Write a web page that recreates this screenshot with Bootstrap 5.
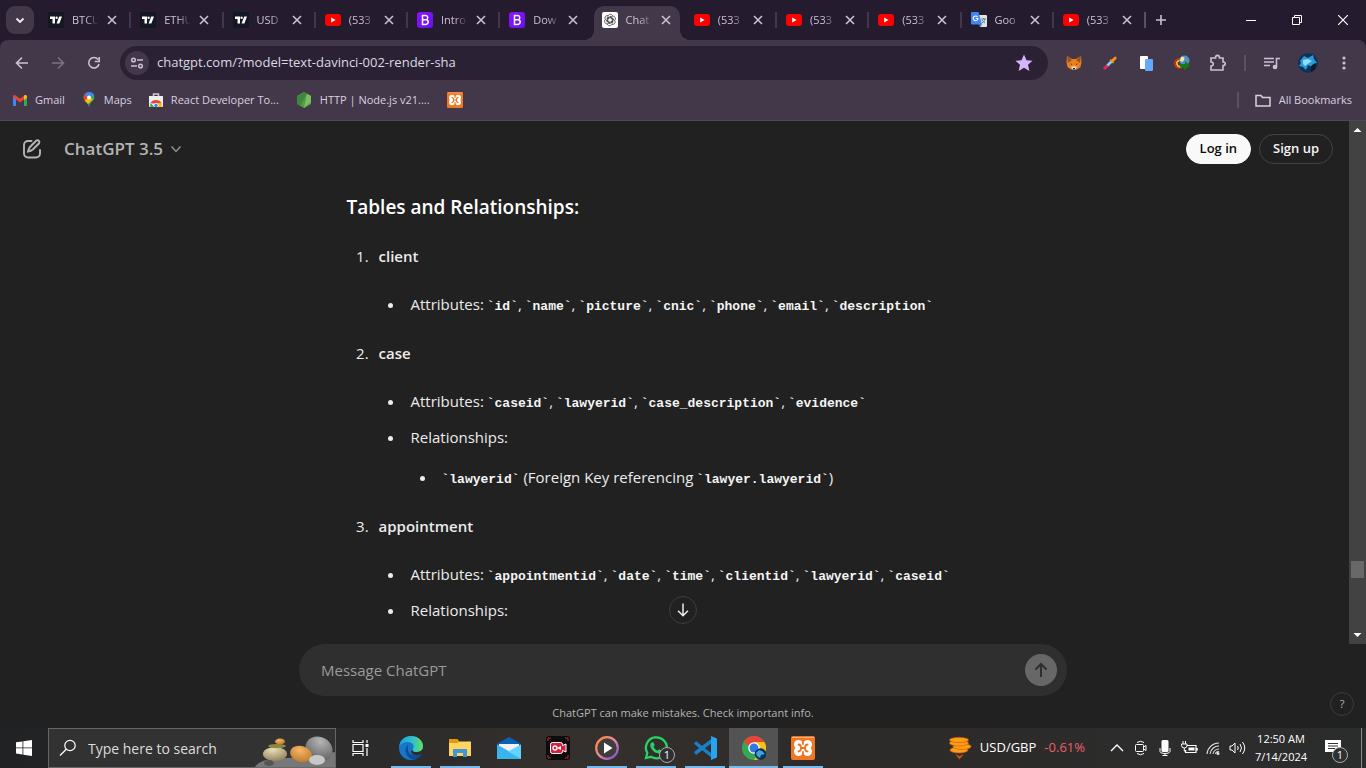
<!DOCTYPE html>
<html lang="en" data-bs-theme="dark">
<head>
<meta charset="utf-8">
<meta name="viewport" content="width=device-width, initial-scale=1">
<title>ChatGPT</title>
<link rel="stylesheet" href="https://cdn.jsdelivr.net/npm/bootstrap@5.3.0/dist/css/bootstrap.min.css">
<style>
:root{--ui:"Open Sans","Noto Sans",sans-serif;--frame:#241b2e;--bar:#433849;--soft:#cdbfd9}
body{font-family:var(--ui);background:#212121;color:#ececec;font-size:15px;overflow:hidden}
svg{display:block;flex:none}
button{font-family:inherit;color:inherit}
.plain{background:none;border:0;padding:0;display:flex;align-items:center;justify-content:center;flex:none}
a{color:inherit;text-decoration:none}
/* browser tabs */
.tabstrip{background:var(--frame);height:40px;color:var(--soft)}
.tabsearch{width:28px;height:28px;border-radius:9px;background:var(--bar);margin:0 3px 0 6px}
.tab{flex:1 1 0;min-width:0;height:40px;padding:0 11px 0 11px;position:relative;font-size:11px}
.tab::before{content:"";position:absolute;left:0;top:12px;width:2px;height:16px;background:#43374b}
.tab:first-child::before,.tab.current::before,.tab.current + .tab::before{display:none}
.tab-label{white-space:nowrap;width:30px;margin:0 4px 0 8px;-webkit-mask-image:linear-gradient(90deg,#000 45%,transparent 90%);mask-image:linear-gradient(90deg,#000 45%,transparent 90%)}
.tab.current{z-index:1}
.tab-shape{position:absolute;z-index:-1;left:3px;right:3px;top:6px;bottom:0;background:var(--bar);border-radius:10px 10px 0 0}
.tab-shape::before,.tab-shape::after{content:"";position:absolute;bottom:0;width:10px;height:10px}
.tab-shape::before{left:-10px;background:radial-gradient(circle at 0 0,transparent 10px,var(--bar) 10px)}
.tab-shape::after{right:-10px;background:radial-gradient(circle at 100% 0,transparent 10px,var(--bar) 10px)}
.tabs-right{width:222px}
.winbtn{width:46px;height:40px;color:#fff}
/* toolbar */
.chromebars{background:var(--frame)}
.chromebars-in{background:var(--bar);border-radius:8px 8px 0 0;border-bottom:1px solid #51465a;height:81px;color:var(--soft)}
.toolbar{height:46px;padding-left:4px;padding-right:4px}
.tool{width:36px;height:36px}
.urlbar{background:#2a2234;height:34px;border-radius:17px;margin:0 8px;padding:0 12px 0 5px}
.site{width:24px;height:24px;border-radius:50%;background:var(--bar)}
.urlbar input,.ask input,.find input{background:none;border:0;outline:0;padding:0;min-width:0;color:inherit}
.urlbar input{font-size:13px;color:#ded8e3;margin-left:8px}
.rule{width:2px;height:16px;background:#5c5066;flex:none}
.marks{height:28px;padding:0 14px 0 13px;font-size:11px;color:#d9cfe1}
.marks a{display:flex;align-items:center;gap:8px;white-space:nowrap}
.marks .mark-item{margin-right:17px}
/* chat */
.chat,.chat-main{min-height:0}
.chat-head{height:56px;padding:0 16px 0 20px}
.model{font-size:17px;font-weight:600;color:#b4b4b4;gap:6px}
.pill{height:30px;border-radius:15px;font-size:13px;font-weight:600;padding:0 13px;border:1px solid #424242;background:#212121;color:#f5f5f5}
.pill.solid{background:#f9f9f9;color:#0d0d0d;border-color:#f9f9f9}
.thread{width:656px;max-width:100%;margin:14px auto 0;line-height:28px}
.thread h3{font-size:19px;font-weight:600;line-height:32px;margin:0 0 19px}
.thread p{margin:0}
.thread ol,.thread ul{padding-left:26px;margin:0}
.thread ul{list-style:disc}
.thread li{padding-left:6px}
.thread ol > li{margin-bottom:21px}
.thread ol > li::marker{content:counter(list-item) ".\00a0"}
.thread ol > li > ul{margin-top:20px}
.thread ul > li + li{margin-top:8px}
.thread ul ul{margin-top:12px}
.thread strong{font-weight:600}
.thread code{font:700 13px/20px "Liberation Mono",monospace;color:#f5f5f5;margin-left:-1px}
.scroller{width:17px;background:#424242;flex:none;padding:4px 0}
.thumb{width:13px;height:17px;background:#686868;margin-top:auto;margin-bottom:52px}
.jump{position:absolute;left:50%;bottom:20px;margin-left:-14px;width:28px;height:28px;border-radius:50%;border:1px solid #3d3d3d;background:#212121}
.foot{height:84px;position:relative}
.ask{width:768px;max-width:100%;height:52px;border-radius:26px;background:#2f2f2f;padding:0 10px 0 22px}
.ask input::placeholder{color:#9b9b9b;opacity:1}
.send{width:32px;height:32px;border-radius:50%;background:#676767}
.note{font-size:11px;line-height:16px;color:#b4b4b4;margin-top:9px}
.help{position:absolute;right:12px;bottom:12px;width:24px;height:24px;border-radius:50%;border:1px solid #3d3d3d;background:#212121;font-size:11px;color:#b4b4b4}
/* taskbar */
.taskbar{height:40px;background:linear-gradient(90deg,#202224,#2a2a2a 25%,#34302d 42%,#2d2b2a 60%,#2b2c2c);color:#fff;font-size:14px;flex:none}
.start{width:48px;height:40px}
.find{width:288px;height:40px;background:#323232;border:1px solid #666;padding-left:10px;position:relative}
.find input{width:150px;font-size:14px;margin-left:11px}
.find input::placeholder{color:#dcdcdc;opacity:1}
.find .art{position:absolute;right:0;bottom:0}
.apps{padding-left:2px}
.app{width:49px;height:40px;position:relative}
.app.open::after{content:"";position:absolute;left:5px;right:4px;bottom:0;height:2px;background:#76b9ed}
.app.front{background:#535353}
.app.front::after{left:0;right:0}
.count{position:absolute;left:28px;top:19px;width:16px;height:16px;border:1px solid #aaa;border-radius:50%;background:#303030;font-size:11px;line-height:14px;text-align:center}
.bell .count{left:19px}
.rates{font-size:13px}
.drop{color:#ee6065}
.tray{width:24px;height:40px}
.clock{width:64px;font-size:11px;line-height:18px;text-align:center}
.bell{width:40px;height:40px;position:relative}
.edge{width:1px;background:#888;margin:0 4px 0 8px}
</style>
</head>
<body class="vh-100 d-flex flex-column">
<svg width="0" height="0" class="position-absolute" aria-hidden="true">
<defs>
<linearGradient id="gb" x1="0" y1="0" x2="1" y2="1"><stop stop-color="#9013fb"/><stop offset="1" stop-color="#6610f2"/></linearGradient>
<linearGradient id="ge" x1="0" y1="0" x2="1" y2="0"><stop stop-color="#1b9de2"/><stop offset=".6" stop-color="#35c1c9"/><stop offset="1" stop-color="#62e257"/></linearGradient>
<linearGradient id="gp" x1="0" y1="0" x2="1" y2="1"><stop stop-color="#ff8a33"/><stop offset=".5" stop-color="#e08aa0"/><stop offset="1" stop-color="#6c50d0"/></linearGradient>
<radialGradient id="stone" cx=".4" cy=".2" r=".8"><stop stop-color="#b5b5b5"/><stop offset="1" stop-color="#626262"/></radialGradient>
<radialGradient id="sand" cx=".4" cy=".2" r=".8"><stop stop-color="#eadfb8"/><stop offset="1" stop-color="#94845c"/></radialGradient>
<radialGradient id="amber" cx=".4" cy=".3" r=".8"><stop stop-color="#f3b768"/><stop offset="1" stop-color="#b97525"/></radialGradient>
<radialGradient id="wolf" cx=".5" cy=".45" r=".55"><stop stop-color="#8edcff"/><stop offset=".5" stop-color="#2786bd"/><stop offset="1" stop-color="#0b2748"/></radialGradient>
<symbol id="x" viewBox="0 0 12 12"><path d="M2 2l8 8M10 2l-8 8" stroke="currentColor" stroke-width="1.6" fill="none"/></symbol>
<symbol id="tv" viewBox="0 0 16 16"><rect width="16" height="16" rx="2" fill="#131722"/><path d="M2 4.500h5v7H4.500V7H2z" fill="#fff"/><circle cx="8.600" cy="5.700" r="1.200" fill="#fff"/><path d="M11.200 4.500H14l-2.600 7H8.600z" fill="#fff"/></symbol>
<symbol id="yt" viewBox="0 0 16 16"><rect y="2" width="16" height="12" rx="3" fill="#f00"/><path d="M6.200 5.500v5L10.600 8z" fill="#fff"/></symbol>
<symbol id="bs" viewBox="0 0 16 16"><rect width="16" height="16" rx="3" fill="url(#gb)"/><path d="M5.500 3.600h3.200c2.600 0 2.700 3.500.5 4.100 2.900.5 2.500 4.700-.6 4.700H5.500zM5.500 7.800h3.400" fill="none" stroke="#fff" stroke-width="1.500"/></symbol>
<symbol id="gpt" viewBox="0 0 16 16"><rect width="16" height="16" rx="2" fill="#fff"/><g fill="none" stroke="#222" stroke-width=".65"><g id="petal"><path d="M5.900 9.200V4.800c0-3 4.200-3.400 4.800-.8M8 4.700 11.600 6.800"/></g><use href="#petal" transform="rotate(60 8 8)"/><use href="#petal" transform="rotate(120 8 8)"/><use href="#petal" transform="rotate(180 8 8)"/><use href="#petal" transform="rotate(240 8 8)"/><use href="#petal" transform="rotate(300 8 8)"/></g></symbol>
<symbol id="gt" viewBox="0 0 16 16"><path d="M7 3h8a1 1 0 0 1 1 1v10a1 1 0 0 1-1 1H9z" fill="#dfe5e2"/><path d="M10 7h5M12.500 6v1m1.500 0c-.5 2-1.500 3-3 4m0-3c.8 1.400 1.600 2.200 3 3" stroke="#607d8b" fill="none"/><path d="M1 0h6.500L11 12.500H1a1 1 0 0 1-1-1V1a1 1 0 0 1 1-1z" fill="#4285f4"/><path d="M8 12.500h3L9 15z" fill="#1967d2"/><path d="M6.600 5A2.400 2.400 0 1 0 7 6.500H4.800" fill="none" stroke="#fff" stroke-width="1.100"/></symbol>
<symbol id="xampp" viewBox="0 0 24 24"><rect width="24" height="24" rx="2" fill="#ef7622"/><path d="M1 1.500h22" stroke="#ffb27a"/><g fill="#fff"><circle cx="7.500" cy="8.500" r="4.500"/><circle cx="16.500" cy="8.500" r="4.500"/><circle cx="7.500" cy="15.500" r="4.500"/><circle cx="16.500" cy="15.500" r="4.500"/><path d="M6 8h12v8H6z"/></g><path d="M7.500 8.500q2.500 0 2.500 3.500t-2.500 3.500M16.500 8.500q-2.500 0-2.500 3.500t2.500 3.500M10 12h4M12 3v5M12 16v5" fill="none" stroke="#ef7622" stroke-width="1.800" stroke-linecap="round"/></symbol>
</defs></svg>

<header>
<div class="tabstrip d-flex align-items-center">
  <button class="plain tabsearch" aria-label="Search tabs"><svg width="10" height="10" viewBox="0 0 10 10"><path d="M1.500 3.500 5 7l3.500-3.500" fill="none" stroke="#eee" stroke-width="1.800"/></svg></button>
  <nav class="d-flex flex-grow-1" aria-label="Tabs">
    <div class="tab d-flex align-items-center"><svg width="16" height="16"><use href="#tv"/></svg><span class="tab-label">BTCU</span><button class="plain" aria-label="Close"><svg width="12" height="12"><use href="#x"/></svg></button></div>
    <div class="tab d-flex align-items-center"><svg width="16" height="16"><use href="#tv"/></svg><span class="tab-label">ETHU</span><button class="plain" aria-label="Close"><svg width="12" height="12"><use href="#x"/></svg></button></div>
    <div class="tab d-flex align-items-center"><svg width="16" height="16"><use href="#tv"/></svg><span class="tab-label">USD</span><button class="plain" aria-label="Close"><svg width="12" height="12"><use href="#x"/></svg></button></div>
    <div class="tab d-flex align-items-center"><svg width="16" height="16"><use href="#yt"/></svg><span class="tab-label">(533</span><button class="plain" aria-label="Close"><svg width="12" height="12"><use href="#x"/></svg></button></div>
    <div class="tab d-flex align-items-center"><svg width="16" height="16"><use href="#bs"/></svg><span class="tab-label">Intro</span><button class="plain" aria-label="Close"><svg width="12" height="12"><use href="#x"/></svg></button></div>
    <div class="tab d-flex align-items-center"><svg width="16" height="16"><use href="#bs"/></svg><span class="tab-label">Dow</span><button class="plain" aria-label="Close"><svg width="12" height="12"><use href="#x"/></svg></button></div>
    <div class="tab current d-flex align-items-center"><span class="tab-shape"></span><svg width="16" height="16"><use href="#gpt"/></svg><span class="tab-label">Chat</span><button class="plain" aria-label="Close"><svg width="12" height="12"><use href="#x"/></svg></button></div>
    <div class="tab d-flex align-items-center"><svg width="16" height="16"><use href="#yt"/></svg><span class="tab-label">(533</span><button class="plain" aria-label="Close"><svg width="12" height="12"><use href="#x"/></svg></button></div>
    <div class="tab d-flex align-items-center"><svg width="16" height="16"><use href="#yt"/></svg><span class="tab-label">(533</span><button class="plain" aria-label="Close"><svg width="12" height="12"><use href="#x"/></svg></button></div>
    <div class="tab d-flex align-items-center"><svg width="16" height="16"><use href="#yt"/></svg><span class="tab-label">(533</span><button class="plain" aria-label="Close"><svg width="12" height="12"><use href="#x"/></svg></button></div>
    <div class="tab d-flex align-items-center"><svg width="16" height="16"><use href="#gt"/></svg><span class="tab-label">Goo</span><button class="plain" aria-label="Close"><svg width="12" height="12"><use href="#x"/></svg></button></div>
    <div class="tab d-flex align-items-center"><svg width="16" height="16"><use href="#yt"/></svg><span class="tab-label">(533</span><button class="plain" aria-label="Close"><svg width="12" height="12"><use href="#x"/></svg></button></div>
  </nav>
  <div class="tabs-right d-flex align-items-center">
    <span class="rule"></span>
    <button class="plain ms-2" aria-label="New tab"><svg width="14" height="14" viewBox="0 0 14 14"><path d="M7 2v10M2 7h10" stroke="currentColor" stroke-width="1.600"/></svg></button>
    <button class="plain winbtn ms-auto" aria-label="Minimize"><svg width="10" height="10"><path d="M0 5.500h10" stroke="currentColor"/></svg></button>
    <button class="plain winbtn" aria-label="Restore"><svg width="10" height="10"><path d="M.5 2.500h7v7h-7zM2.500 2.500v-2h7v7h-2" fill="none" stroke="currentColor"/></svg></button>
    <button class="plain winbtn" aria-label="Close window"><svg width="10" height="10"><path d="M0 0l10 10M10 0 0 10" stroke="currentColor" stroke-width="1.200"/></svg></button>
  </div>
</div>
<div class="chromebars"><div class="chromebars-in">
  <div class="toolbar d-flex align-items-center">
    <button class="plain tool" aria-label="Back"><svg width="14" height="14" viewBox="0 0 14 14"><path d="M13 7H2M7 1.500 1.500 7 7 12.500" fill="none" stroke="currentColor" stroke-width="1.600"/></svg></button>
    <button class="plain tool" aria-label="Forward"><svg width="14" height="14" viewBox="0 0 14 14"><path d="M1 7h11M7 1.500 12.500 7 7 12.500" fill="none" stroke="#7d7086" stroke-width="1.600"/></svg></button>
    <button class="plain tool" aria-label="Reload"><svg width="14" height="14" viewBox="0 0 14 14"><path d="M11 3.500A5.200 5.200 0 1 0 12 8M12.200 1v4.500H7.700" fill="none" stroke="currentColor" stroke-width="1.600"/></svg></button>
    <div class="urlbar d-flex align-items-center flex-grow-1">
      <button class="plain site" aria-label="Site information"><svg width="14" height="14" viewBox="0 0 14 14" fill="none" stroke="currentColor" stroke-width="1.500"><circle cx="3.500" cy="4" r="1.800"/><path d="M7 4h6M1 10h6"/><circle cx="10.500" cy="10" r="1.800"/></svg></button>
      <input class="flex-grow-1" type="text" aria-label="Address" value="chatgpt.com/?model=text-davinci-002-render-sha">
      <button class="plain" aria-label="Bookmarked"><svg width="24" height="18" viewBox="0 0 24 18"><path d="M12 .5l2.500 5.700 6 .5L16 10.800l1.400 6.200-5.400-3.200L6.600 17 8 10.800 3.500 6.700l6-.5z" fill="#d4b4ff"/></svg></button>
    </div>
    <button class="plain tool" aria-label="MetaMask"><svg width="16" height="16" viewBox="0 0 16 16"><path d="M1 1l5 3h4l5-3 .5 6-1 5-3.500 2.500H5L1.500 12l-1-5z" fill="#e8821e"/><path d="M1 1l5 4-4 3zM15 1l-5 4 4 3z" fill="#a3501f"/><path d="M5 12l2 3h2l2-3-3-1z" fill="#e5d5c5"/><path d="M4 8.500l2 .5v1zM12 8.500l-2 .5v1zM7 13h2v1.500H7z" fill="#222"/></svg></button>
    <button class="plain tool" aria-label="Color picker"><svg width="14" height="14" viewBox="0 0 14 14"><path d="M8.500 5.500 3.500 10.500" stroke="#7ad2ff" stroke-width="2.600"/><path d="M3.500 8.500 5.500 10.500 2.500 13.500H.5v-2z" fill="#f3225b"/><path d="M8 4l4-3.500q2 0 1.500 2L10 6.500z" fill="#ff9215"/><path d="M7 3.500 10.500 7" stroke="#ff9215" stroke-width="1.500"/></svg></button>
    <button class="plain tool" aria-label="Copy extension"><svg width="14" height="15"><rect x="1" width="8" height="13" rx="1" fill="#fff"/><rect x="6" y="3" width="8" height="12" rx="1" fill="#65a9fb"/></svg></button>
    <button class="plain tool" aria-label="Download manager"><svg width="16" height="16" viewBox="0 0 16 16"><path d="M8 3.500C3 3 0 6 1 9.500 2 13 6 13.500 8 12" fill="none" stroke="#e52b1d" stroke-width="1.600"/><path d="M8 5C4 5 2 7 3 9.500s3 2.500 5 1.500" fill="none" stroke="#f2d11b" stroke-width="1.600"/><circle cx="10.500" cy="5.500" r="5" fill="#5490c8"/><path d="M7 2c3-1 4 1 3 3S8 7 6 6z" fill="#e3efb0"/><path d="M5 9h6V6l5 4.500-6 4.500v-2.500H6.500z" fill="#117d12"/></svg></button>
    <button class="plain tool" aria-label="Extensions"><svg width="18" height="18" viewBox="0 0 18 18"><path d="M2 4h4.500c0-3.500 4-3.500 4 0H14v4c3 0 3 3.500 0 3.500V16H2v-4c3 0 3-4 0-4z" fill="none" stroke="currentColor" stroke-width="1.600"/></svg></button>
    <span class="rule mx-2"></span>
    <button class="plain tool" aria-label="Media controls"><svg width="16" height="14" viewBox="0 0 16 14" fill="none" stroke="currentColor" stroke-width="1.500"><path d="M0 2.500h10M0 6h10M0 9.500h6M12.500 11V2.500H16"/><circle cx="11" cy="11" r="1.600" fill="currentColor"/></svg></button>
    <button class="plain tool" aria-label="Profile"><svg width="20" height="20" viewBox="0 0 20 20"><circle cx="10" cy="10" r="10" fill="#0d3159"/><path d="M2 8 6 3l4 2 5-3 1 4 3 4-4 1-1 3-4-2-2 5-3-3-4-1 2-3z" fill="#2c9bd4"/><path d="M5 7l5-1 4 2-3 2-4 3-2-2z" fill="#8fdcff"/><path d="M13 13l5-3-1 6-4 3z" fill="#101828"/></svg></button>
    <button class="plain tool" aria-label="Menu"><svg width="4" height="14" fill="currentColor"><circle cx="2" cy="2" r="1.600"/><circle cx="2" cy="7" r="1.600"/><circle cx="2" cy="12" r="1.600"/></svg></button>
  </div>
  <nav class="marks d-flex align-items-center" aria-label="Bookmarks">
    <a href="#" class="mark-item"><svg width="14" height="11" viewBox="0 0 14 11"><path d="M0 2h3v9H1a1 1 0 0 1-1-1z" fill="#4285f4"/><path d="M11 2h3v8a1 1 0 0 1-1 1h-2z" fill="#34a853"/><path d="M0 2C0 0 2-.5 3 .7l4 3 4-3c1-1.200 3-.7 3 1.300L7 7.500z" fill="#ea4335"/><path d="M11 .7c1-1.200 3-.7 3 1.300v1l-3 2z" fill="#fbbc04"/></svg>Gmail</a>
    <a href="#" class="mark-item"><svg width="14" height="16" viewBox="1 0 14 16"><path d="M8 0a5.500 5.500 0 0 0-5.500 5.500C2.500 9 8 10 8 16c0-6 5.500-7 5.500-10.500A5.500 5.500 0 0 0 8 0z" fill="#34a853"/><path d="M3.800 2.200A5.500 5.500 0 0 1 13 3L8 8 3 7.500z" fill="#4285f4"/><path d="M3.800 2.200 8 5.500 4.500 9.500A5.500 5.500 0 0 1 3.800 2.200z" fill="#ea4335"/><path d="M8 5.500 3.500 8.500 7 12l5-5z" fill="#fbbc04"/><circle cx="8" cy="5.500" r="2" fill="#fff"/></svg>Maps</a>
    <a href="#" class="mark-item"><svg width="14" height="14" viewBox="0 0 14 14"><path d="M4.500 4V1h5v3" fill="none" stroke="#ccc" stroke-width="1.500"/><path d="M0 3h14v10a1 1 0 0 1-1 1H1a1 1 0 0 1-1-1z" fill="#eee"/><path d="M1.500 10a6 5 0 0 1 11 0L7 11z" fill="#ea4335"/><path d="M1.500 14a6 6 0 0 1 0-4l4 4z" fill="#34a853"/><path d="M8 14h4.500a6 6 0 0 0 0-4H8z" fill="#fbbc04"/><circle cx="7" cy="12.500" r="2.200" fill="#4285f4" stroke="#fff" stroke-width=".8"/></svg>React Developer To...</a>
    <a href="#" class="mark-item"><svg width="16" height="16" viewBox="-1 0 16 16"><path d="M7 0l7 4v8l-7 4-7-4V4z" fill="#539e43"/><path d="M7 0 0 4v8l3 1.700L10 1.700z" fill="#3f873f"/><path d="M10 1.700 14 4v6L7 16z" fill="#7bbf63"/></svg>HTTP | Node.js v21....</a>
    <a href="#" aria-label="XAMPP"><svg width="16" height="16"><use href="#xampp"/></svg></a>
    <span class="rule ms-auto me-3"></span>
    <a href="#"><svg width="16" height="13" viewBox="0 0 16 13"><path d="M1 1.500h5l1.500 2H15V12H1z" fill="none" stroke="currentColor" stroke-width="1.500"/></svg>All Bookmarks</a>
  </nav>
</div></div>
</header>

<main class="chat flex-grow-1 d-flex flex-column">
  <div class="chat-main d-flex flex-grow-1 position-relative">
    <section class="flex-grow-1 overflow-hidden">
      <div class="chat-head d-flex align-items-center">
        <button class="plain" aria-label="New chat"><svg width="24" height="24" viewBox="0 0 24 24" fill="none" stroke="#b4b4b4" stroke-width="1.900"><path d="M11.500 4H8a4 4 0 0 0-4 4v8.500A4 4 0 0 0 8 20.500h8a4 4 0 0 0 4-4V13" stroke-linecap="round"/><path d="M18.800 3.800a2 2 0 0 0-2.700 0L10 10q-1.500 1.500-2 4.500 3-.5 4.800-2l6.300-6.200a2 2 0 0 0-.3-2.500z"/></svg></button>
        <button class="plain model ms-3 ps-1">ChatGPT 3.5 <svg width="14" height="14" viewBox="0 0 14 14"><path d="M2.500 4.500 7 9.500l4.500-5" fill="none" stroke="#8e8e8e" stroke-width="1.500"/></svg></button>
        <div class="ms-auto d-flex gap-2"><button class="pill solid">Log in</button><button class="pill">Sign up</button></div>
      </div>
      <article class="thread">
        <h3>Tables and Relationships:</h3>
        <ol>
          <li><p><strong>client</strong></p>
            <ul><li>Attributes: <code>`id`</code>, <code>`name`</code>, <code>`picture`</code>, <code>`cnic`</code>, <code>`phone`</code>, <code>`email`</code>, <code>`description`</code></li></ul></li>
          <li><p><strong>case</strong></p>
            <ul><li>Attributes: <code>`caseid`</code>, <code>`lawyerid`</code>, <code>`case_description`</code>, <code>`evidence`</code></li>
              <li>Relationships:<ul><li><code>`lawyerid`</code> (Foreign Key referencing <code>`lawyer.lawyerid`</code>)</li></ul></li></ul></li>
          <li><p><strong>appointment</strong></p>
            <ul><li>Attributes: <code>`appointmentid`</code>, <code>`date`</code>, <code>`time`</code>, <code>`clientid`</code>, <code>`lawyerid`</code>, <code>`caseid`</code></li>
              <li>Relationships:</li></ul></li>
        </ol>
      </article>
    </section>
    <div class="scroller d-flex flex-column align-items-center" aria-hidden="true">
      <svg width="9" height="10"><path d="M.5 7h8l-4-4z" fill="#fff"/></svg>
      <span class="thumb"></span>
      <svg width="9" height="10"><path d="M.5 3h8l-4 4z" fill="#fff"/></svg>
    </div>
    <button class="plain jump" aria-label="Scroll to bottom"><svg width="16" height="16" viewBox="0 0 16 16"><path d="M8 1.500v12M3 8.800l5 5 5-5" fill="none" stroke="#ececec" stroke-width="1.500"/></svg></button>
  </div>
  <div class="foot d-flex flex-column align-items-center">
    <form class="ask d-flex align-items-center">
      <input class="flex-grow-1" type="text" aria-label="Message" placeholder="Message ChatGPT">
      <button class="plain send" type="button" aria-label="Send"><svg width="18" height="18" viewBox="0 0 18 18"><path d="M9 16V3M3.500 8.500 9 3l5.500 5.500" fill="none" stroke="#2f2f2f" stroke-width="2"/></svg></button>
    </form>
    <div class="note">ChatGPT can make mistakes. Check important info.</div>
    <button class="plain help">?</button>
  </div>
</main>

<footer class="taskbar d-flex">
  <button class="plain start" aria-label="Start"><svg width="16" height="16" viewBox="0 0 16 16"><path d="M0 2.300 6.500 1.400v6.100H0zM7.300 1.300 16 0v7.500H7.300zM0 8.300h6.500v6.200L0 13.600zM7.300 8.300H16V16l-8.700-1.300z" fill="#fff"/></svg></button>
  <label class="find d-flex align-items-center">
    <svg width="18" height="18" viewBox="0 0 18 18"><circle cx="11" cy="6.500" r="5.200" fill="none" stroke="#fff" stroke-width="1.200"/><path d="M7.300 10.300 1 16.500" stroke="#fff" stroke-width="1.300"/></svg>
    <input type="text" aria-label="Search" placeholder="Type here to search">
    <svg class="art" width="80" height="38" viewBox="0 0 80 38"><path d="M0 38c4-7 18-9 30-9 18 0 34-3 50-6v15z" fill="#777"/><ellipse cx="64" cy="20" rx="14" ry="12" transform="rotate(30 64 20)" fill="url(#stone)"/><ellipse cx="20" cy="25" rx="12" ry="7" fill="url(#sand)"/><ellipse cx="22" cy="17" rx="9" ry="2" fill="#8d8a3c"/><ellipse cx="25" cy="12.500" rx="5" ry="3" fill="url(#amber)"/><ellipse cx="46" cy="25" rx="11" ry="8" transform="rotate(15 46 25)" fill="url(#amber)"/><ellipse cx="14" cy="34" rx="5" ry="3" fill="#555"/><ellipse cx="62" cy="31" rx="8" ry="5" fill="#c8c8c8"/></svg>
  </label>
  <button class="plain start" aria-label="Task view"><svg width="17" height="16" viewBox="0 0 17 16" fill="none" stroke="#fff" stroke-width="1.200"><path d="M1 4.500h10v7H1zM1 0v2.500h10V0M1 16v-2.500h10V16M15 0v3M15 8v8"/><path d="M13.500 4h3v3h-3z" fill="#fff" stroke="none"/></svg></button>
  <div class="apps d-flex">
    <button class="plain app open" aria-label="Edge"><svg width="24" height="24" viewBox="0 0 24 24"><circle cx="12" cy="12" r="12" fill="#1677c8"/><path d="M.2 10.500C1 4 6 0 12 0c7 0 12 4.500 12 10 0 4-3 6-6.500 6-4 0-5-2-3.500-3.500 2-2.500-.5-6.500-5-6.500C5 6 2 8 .2 10.500z" fill="url(#ge)"/><path d="M9 9c-5 4-2 14 6 14.500C19 23 22 20 22.500 18c-6 3-13 1-13.500-4z" fill="#0c4c96"/><path d="M14 12.500c-1.500 2 0 4 4 3.500 2.500 0 4.500-1 6-3v4l-1.500 1.200c-5 2-10 1-10.500-3z" fill="#2d2c2b"/></svg></button>
    <button class="plain app open" aria-label="File Explorer"><svg width="22" height="20" viewBox="0 0 22 20"><path d="M0 1.500h8l2 2h12V18H0z" fill="#ffd562"/><path d="M0 1h8.500l1.500 2.500-1 1.500H0z" fill="#e59a0a"/><path d="M4 19v-8h14v8h-4v-4H8v4z" fill="#3f97d5"/></svg></button>
    <button class="plain app" aria-label="Mail"><svg width="24" height="22" viewBox="0 0 24 22"><path d="M0 7 12 0l12 7v15H0z" fill="#0a63b8"/><path d="M2 7h20v8H2z" fill="#f2f2f2"/><path d="M0 7.500 24 21v1H0z" fill="#39b5ee"/><path d="M24 7.500 11 14.500 24 22z" fill="#62d3fb"/></svg></button>
    <button class="plain app" aria-label="Recorder"><svg width="24" height="24" viewBox="0 0 24 24"><rect width="24" height="24" rx="3" fill="#0c0c0c"/><path d="M2 5V2h3M19 2h3v3M22 19v3h-3M5 22H2v-3" fill="none" stroke="#c9203b"/><path d="M6.500 6.500h8q2 0 2 2v1l3.500-1.500v8l-3.500-1.500v1q0 2-2 2h-8q-2 0-2-2v-7q0-2 2-2z" fill="#d71f3d" stroke="#fff"/><circle cx="9" cy="12" r="2" fill="none" stroke="#fff" stroke-width="1.300"/><path d="M11 12l4-2v4z" fill="#fff"/></svg></button>
    <button class="plain app open" aria-label="Media Player"><svg width="24" height="24" viewBox="0 0 24 24"><circle cx="12" cy="12" r="10.800" fill="#403c3d" stroke="url(#gp)" stroke-width="2.200"/><path d="M9 6.500v11l8.500-5.500z" fill="#fff"/></svg></button>
    <button class="plain app open" aria-label="WhatsApp"><svg width="24" height="24" viewBox="0 0 24 24"><path d="M2 22l1.300-5A10.500 10.500 0 1 1 7 20.800z" fill="none" stroke="#25d366" stroke-width="2.300"/><path d="M7.500 6.500l2-.2 1.200 3-1.200 1.500c1 2 2 3 4 4l1.500-1.600 3 1.500c0 2-1.500 3-3.500 2.800C10 17 6 12 6.300 9c0-1.200.5-2 1.200-2.500z" fill="#25d366"/></svg><span class="count">1</span></button>
    <button class="plain app open" aria-label="Visual Studio Code"><svg width="24" height="24" viewBox="0 0 24 24"><path d="M18.500 5 2 17.500M2 6.500l16.500 13" stroke="#1780c8" stroke-width="3.500"/><path d="M18 0l6 2.500v19L18 24z" fill="#29a4ec"/></svg></button>
    <button class="plain app open front" aria-label="Chrome"><svg width="24" height="24" viewBox="0 0 24 24"><circle cx="12" cy="12" r="12" fill="#34a853"/><path d="M12 12 1.600 6A12 12 0 0 1 22.400 6z" fill="#ea4335"/><path d="M12 12V6h10.400A12 12 0 0 1 12 24l5-9z" fill="#fbc116"/><circle cx="12" cy="12" r="5.800" fill="#fff"/><circle cx="12" cy="12" r="4.500" fill="#3478e6"/><circle cx="18.500" cy="18" r="5.800" fill="#0d3159"/><path d="M14 17l3-3 3 1 3 3-4 1-1 3-3-2z" fill="#3fa5dc"/></svg></button>
    <button class="plain app open" aria-label="XAMPP"><svg width="24" height="24"><use href="#xampp"/></svg></button>
  </div>
  <div class="ms-auto d-flex align-items-center">
    <button class="plain rates gap-2 me-3"><svg width="24" height="24" viewBox="0 0 24 24"><g fill="#ff9c17" stroke="#c76606" stroke-width=".7"><ellipse cx="11" cy="14" rx="9" ry="3"/><ellipse cx="14" cy="10.500" rx="9" ry="3"/><ellipse cx="11" cy="7" rx="9.500" ry="3"/><ellipse cx="11" cy="4" rx="9.500" ry="2.600"/></g><path d="M7 18l4.500 2 4.500-2-4.500 5.500z" fill="#d54a16"/></svg>USD/GBP <span class="drop">-0.61%</span></button>
    <button class="plain tray ms-1" aria-label="Hidden icons"><svg width="14" height="8"><path d="M1 7l6-6 6 6" fill="none" stroke="#fff" stroke-width="1.400"/></svg></button>
    <button class="plain tray" aria-label="Meet now"><svg width="12" height="16" viewBox="0 0 12 16" fill="none" stroke="#fff"><rect x=".5" y="4.500" width="8" height="7" rx="1"/><path d="M8.500 7 11 5.500v5L8.500 9M2 2.500q3.500-2.500 7 0M2 13.500q3.500 2.500 7 0"/></svg></button>
    <button class="plain tray" aria-label="Microphone"><svg width="12" height="16" viewBox="0 0 12 16"><rect x="2.500" width="7" height="12" rx="1.500" fill="#fff"/><path d="M1 8v3.500q0 2 5 2t5-2V8M6 13.500V16M3.500 15.500h5" fill="none" stroke="#fff"/></svg></button>
    <button class="plain tray" aria-label="Battery"><svg width="17" height="14" viewBox="0 0 17 14"><path d="M6 4.500h9v7H4.500V9M16.200 7v2.500" fill="none" stroke="#fff" stroke-width="1.200"/><path d="M7.500 6.500h6v3h-6z" fill="#fff"/><path d="M2 0v3M4.500 0v3M.5 3h5.500v1.500Q6 7 3.300 7T.5 4.500zM3.300 7v3h2" fill="none" stroke="#fff"/></svg></button>
    <button class="plain tray" aria-label="Network"><svg width="14" height="14" viewBox="0 0 14 14" fill="none" stroke="#ddd" stroke-width="1.100"><path d="M1 13A12 12 0 0 1 13 2M4 13a9 9 0 0 1 9-8M7 13a6 6 0 0 1 6-5M9.500 13a3 3 0 0 1 3.500-2.500"/><circle cx="12" cy="12.500" r="1" fill="#fff"/></svg></button>
    <button class="plain tray" aria-label="Volume"><svg width="17" height="14" viewBox="0 0 17 14" fill="none" stroke="#fff"><path d="M1 5h2l3-3v10L3 9H1zM8.500 5q1.500 2 0 4M11 3q3 4 0 8M13.500 1q4.500 6 0 12"/></svg></button>
    <div class="clock">12:50 AM<br>7/14/2024</div>
    <button class="plain bell" aria-label="Notifications"><svg width="16" height="16" viewBox="0 0 16 16"><path d="M0 0h16v12h-5l-3 3.500V12H0z" fill="#fff"/><path d="M3 3.500h10M3 6h10M3 8.500h7" stroke="#333"/></svg><span class="count">1</span></button>
    <span class="edge align-self-stretch"></span>
  </div>
</footer>
<script src="https://cdn.jsdelivr.net/npm/bootstrap@5.3.0/dist/js/bootstrap.bundle.min.js"></script>
</body>
</html>
